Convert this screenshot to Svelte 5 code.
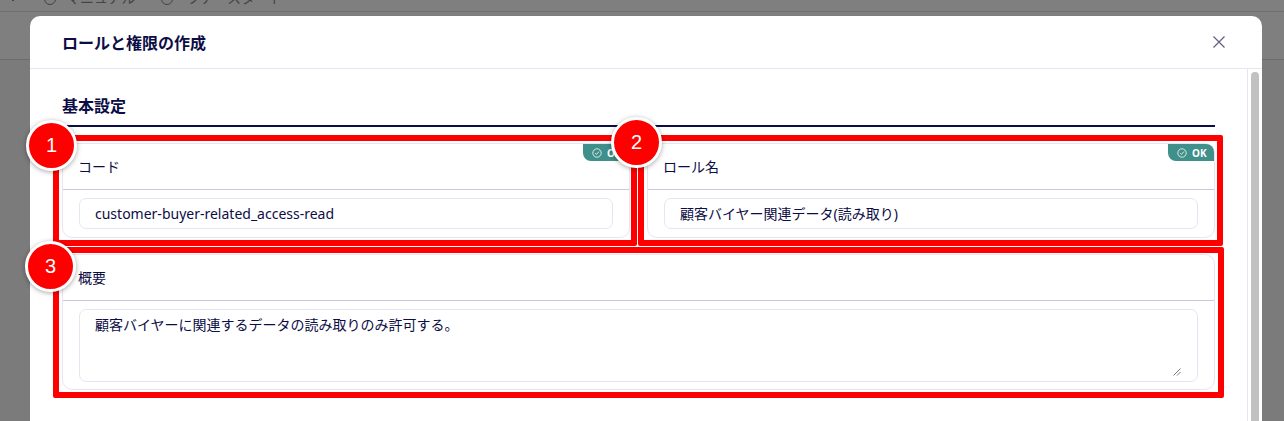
<script>
  const fields = [
    { label: "コード", value: "customer-buyer-related_access-read" },
    { label: "ロール名", value: "顧客バイヤー関連データ(読み取り)" },
  ];
</script>

<div class="page">
  <div class="topbar">
    <div class="nav">
      <svg class="chev" width="6" height="4" viewBox="0 0 6 4"><path d="M0.5 -1.5 L3 1 L5.5 -1.5" /></svg>
      <span class="nav-icon"></span>
      <span class="nav-text">マニュアル</span>
      <span class="nav-icon second"></span>
      <span class="nav-text">ツアースタート</span>
    </div>
  </div>

  <div class="modal">
    <header class="modal-head">
      <h1>ロールと権限の作成</h1>
      <svg class="close" width="14" height="14" viewBox="0 0 14 14" aria-label="閉じる">
        <path d="M1.5 1.5 L12.5 12.5 M12.5 1.5 L1.5 12.5" />
      </svg>
    </header>

    <div class="modal-body">
      <div class="content">
        <h2>基本設定</h2>

        <div class="row">
          {#each fields as field}
            <section class="card">
              <div class="badge">
                <svg width="10" height="10" viewBox="0 0 10 10">
                  <circle cx="5" cy="5" r="4.2" />
                  <path d="M3.2 5.2 L4.5 6.4 L6.9 3.6" />
                </svg>
                <span>OK</span>
              </div>
              <div class="card-label">{field.label}</div>
              <div class="card-body">
                <div class="input">{field.value}</div>
              </div>
            </section>
          {/each}
        </div>

        <section class="card wide">
          <div class="card-label">概要</div>
          <div class="card-body">
            <div class="textarea">
              顧客バイヤーに関連するデータの読み取りのみ許可する。
              <svg class="grip" width="8" height="8" viewBox="0 0 8 8">
                <path d="M0.5 7.5 L7.5 0.5 M4 7.5 L7.5 4" />
              </svg>
            </div>
          </div>
        </section>
      </div>

      <div class="scrollbar"><div class="thumb"></div></div>
    </div>
  </div>

  <!-- annotations on top of the screenshot -->
  <div class="frame f1"></div>
  <div class="frame f2"></div>
  <div class="frame f3"></div>
  <div class="pin p1">1</div>
  <div class="pin p2">2</div>
  <div class="pin p3">3</div>
</div>

<style>
  :global(body) {
    margin: 0;
    background: #7b7b7c;
  }

  .page {
    position: relative;
    width: 1284px;
    height: 421px;
    overflow: hidden;
    background: #7b7b7c;
    font-family: "Noto Sans", "Noto Sans CJK JP", sans-serif;
    color: #0d0d45;
  }

  .topbar {
    height: 59px;
    margin-bottom: -44px;
    background: #7f7f7f;
    border-bottom: 1px solid #6c6c6c;
  }

  .nav {
    display: flex;
    align-items: flex-end;
    height: 11px;
    padding-left: 10px;
    border-bottom: 1px solid #6f6f6f;
    overflow: hidden;
  }

  .chev {
    margin-bottom: 7px;
    fill: none;
    stroke: #444;
    stroke-width: 1;
  }

  .nav-icon {
    width: 12px;
    height: 12px;
    margin-left: 28px;
    margin-bottom: 6px;
    border: 1px solid #444;
    border-radius: 50%;
    box-sizing: border-box;
  }

  .nav-icon.second {
    margin-left: 25px;
  }

  .nav-text {
    margin-left: 10px;
    margin-bottom: 6px;
    font-size: 14px;
    line-height: 14px;
    color: #444;
    white-space: nowrap;
  }

  .nav-icon.second + .nav-text {
    margin-left: 14px;
  }

  .modal {
    position: relative;
    margin: 0 22px 0 30px;
    height: 420px;
    background: #fff;
    border-radius: 10px;
  }

  .modal-head {
    display: flex;
    align-items: center;
    justify-content: space-between;
    height: 52px;
    padding: 0 36px 0 32px;
    border-bottom: 1px solid #e6e6f3;
  }

  h1 {
    margin: 0;
    font-size: 16px;
    font-weight: 700;
    color: #0d0d45;
  }

  .close {
    fill: none;
    stroke: #5f5f85;
    stroke-width: 1.2;
  }

  .modal-body {
    display: flex;
    height: 367px;
  }

  .content {
    width: 1153px;
    padding: 26px 0 0 32px;
  }

  h2 {
    margin: 0;
    height: 30px;
    border-bottom: 2px solid #0d0d45;
    font-size: 16px;
    line-height: 22px;
    font-weight: 700;
  }

  .row {
    display: grid;
    grid-template-columns: 568px 568px;
    gap: 17px;
    margin-top: 16px;
    margin-bottom: 16px;
  }

  .card {
    position: relative;
    height: 95px;
    box-sizing: border-box;
    border: 1px solid #e6e6f3;
    border-radius: 10px;
    display: flex;
    flex-direction: column;
  }

  .card.wide {
    height: 136px;
  }

  .badge {
    position: absolute;
    top: 0;
    right: 0;
    display: flex;
    align-items: center;
    gap: 5px;
    height: 17px;
    width: 46px;
    box-sizing: border-box;
    padding-left: 9px;
    background: #3f8f8a;
    border-radius: 0 8px 0 8px;
    color: #fff;
    font-size: 10px;
    font-weight: 700;
  }

  .badge svg {
    fill: none;
    stroke: #fff;
    stroke-width: 0.8;
  }

  .card-label {
    height: 46px;
    flex: none;
    box-sizing: border-box;
    padding-left: 15px;
    border-bottom: 1px solid #c9c9de;
    font-size: 14px;
    line-height: 45px;
  }

  .card-body {
    flex: 1;
    padding: 8px 16px;
  }

  .input,
  .textarea {
    box-sizing: border-box;
    border: 1px solid #e6e6f3;
    border-radius: 7px;
    padding: 0 15px;
    font-size: 14px;
  }

  .input {
    height: 31px;
    line-height: 30px;
  }

  .textarea {
    position: relative;
    height: 73px;
    line-height: 30px;
  }

  .grip {
    position: absolute;
    right: 16px;
    bottom: 5px;
    fill: none;
    stroke: #555;
    stroke-width: 0.8;
  }

  .scrollbar {
    margin-left: 32px;
    width: 14px;
    box-sizing: border-box;
    border-left: 1px solid #e6e6f3;
    padding: 3px 3px 0;
  }

  .thumb {
    width: 8px;
    height: 100%;
    background: #c1c1c1;
    border-radius: 4px 4px 0 0;
  }

  .frame {
    position: absolute;
    box-sizing: border-box;
    border: 6px solid #fe0000;
    border-radius: 2px;
  }

  .f1 {
    left: 53px;
    top: 135px;
    width: 584px;
    height: 111px;
  }

  .f2 {
    left: 638px;
    top: 135px;
    width: 585px;
    height: 111px;
  }

  .f3 {
    left: 53px;
    top: 247px;
    width: 1171px;
    height: 151px;
  }

  .pin {
    position: absolute;
    width: 51px;
    height: 51px;
    box-sizing: border-box;
    border: 3px solid #fff;
    border-radius: 50%;
    background: #fe0000;
    box-shadow: 0 1px 5px rgba(0, 0, 0, 0.35);
    color: #fff;
    font-family: "Liberation Sans", sans-serif;
    font-size: 20px;
    line-height: 45px;
    text-align: center;
  }

  .p1 {
    left: 26px;
    top: 120px;
  }

  .p2 {
    left: 611px;
    top: 117px;
  }

  .p3 {
    left: 25px;
    top: 241px;
  }
</style>
